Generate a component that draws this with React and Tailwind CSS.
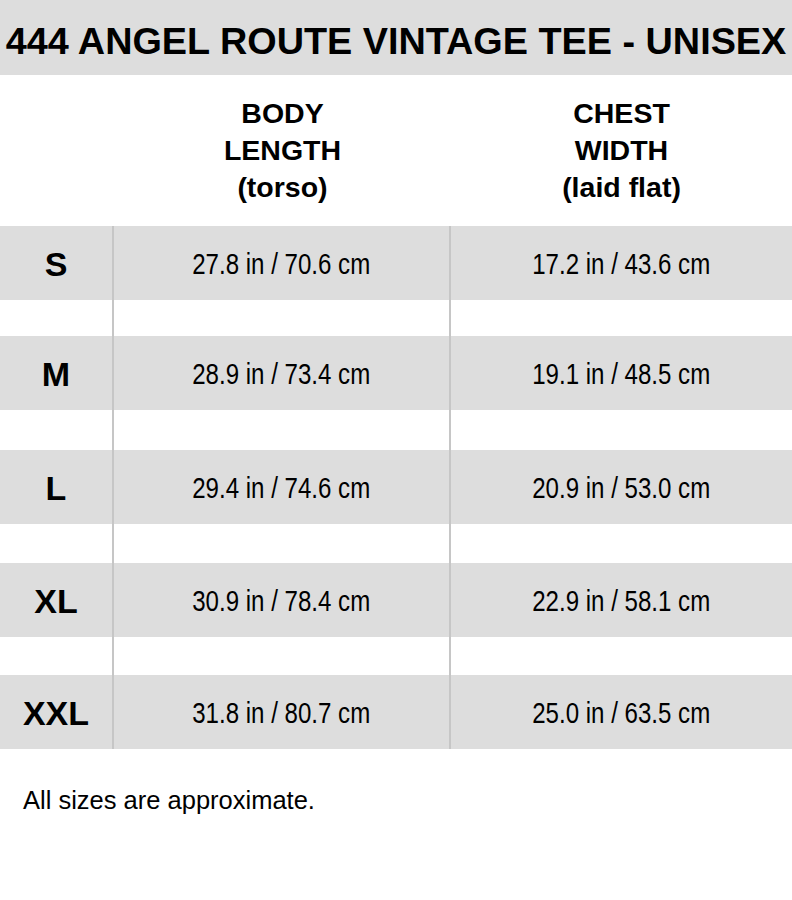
const rows = [
  { size: 'S', body: '27.8 in / 70.6 cm', chest: '17.2 in / 43.6 cm', gap: 'h-[36px]' },
  { size: 'M', body: '28.9 in / 73.4 cm', chest: '19.1 in / 48.5 cm', gap: 'h-[40px]' },
  { size: 'L', body: '29.4 in / 74.6 cm', chest: '20.9 in / 53.0 cm', gap: 'h-[39px]' },
  { size: 'XL', body: '30.9 in / 78.4 cm', chest: '22.9 in / 58.1 cm', gap: 'h-[38px]' },
  { size: 'XXL', body: '31.8 in / 80.7 cm', chest: '25.0 in / 63.5 cm', gap: null },
];

const sans = "font-['Liberation_Sans',Arial,sans-serif]";

// the measurements use a condensed face; squeeze regular Arial-metric text
function Narrow({ children }) {
  return <span className="inline-block whitespace-nowrap scale-x-[0.83]">{children}</span>;
}

function SizeRow({ row }) {
  return (
    <>
      <div className="flex h-[74px] bg-[#dddddd] text-black">
        <div className="w-[114px] border-r-2 border-[#c6c6c6] flex items-center justify-center pt-[2px] text-[34px] font-bold">
          {row.size}
        </div>
        <div className="w-[337px] border-r-2 border-[#c6c6c6] flex items-center justify-center pt-[4px] text-[29px]">
          <Narrow>{row.body}</Narrow>
        </div>
        <div className="flex-1 flex items-center justify-center pt-[4px] text-[29px]">
          <Narrow>{row.chest}</Narrow>
        </div>
      </div>
      {row.gap && (
        <div className={`flex ${row.gap}`}>
          <div className="w-[114px] border-r-2 border-[#c6c6c6]" />
          <div className="w-[337px] border-r-2 border-[#c6c6c6]" />
          <div className="flex-1" />
        </div>
      )}
    </>
  );
}

export default function App() {
  return (
    <div className={`w-[792px] h-[900px] bg-white text-black ${sans}`}>
      <div className="h-[75px] bg-[#dddddd] flex items-center justify-center pt-[8px]">
        <h1 className="text-[37.8px] font-bold leading-none whitespace-nowrap">
          444 ANGEL ROUTE VINTAGE TEE - UNISEX
        </h1>
      </div>

      <div className="flex h-[151px] items-center text-[28.5px] font-bold leading-[37px] text-center">
        <div className="w-[114px]" />
        <div className="w-[337px]">
          BODY<br />LENGTH<br />(torso)
        </div>
        <div className="flex-1">
          CHEST<br />WIDTH<br />(laid flat)
        </div>
      </div>

      {rows.map((row) => (
        <SizeRow key={row.size} row={row} />
      ))}

      <p className="pl-[23px] pt-[39px] text-[25.5px] leading-none">All sizes are approximate.</p>
    </div>
  );
}
